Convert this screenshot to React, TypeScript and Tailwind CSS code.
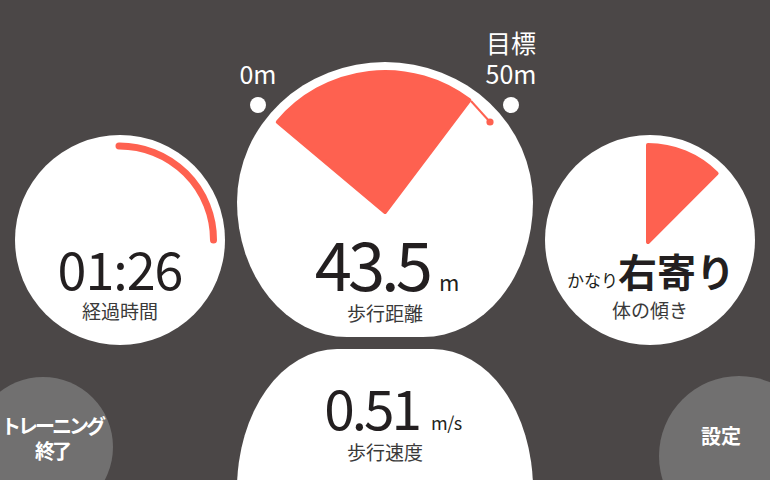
import React from "react";

const coral = "#fe6150";

function TimeDial() {
  return (
    <div className="relative mt-[135px] h-[210px] w-[210px] shrink-0 rounded-full bg-white">
      <svg className="absolute inset-0" width="210" height="210" viewBox="0 0 210 210">
        <path d="M104 11 A94 94 0 0 1 198.5 105" fill="none" stroke={coral} strokeWidth="7" strokeLinecap="round" />
      </svg>
      <div className="relative flex flex-col items-center pt-[107px]">
        <div className="text-[52px] leading-none tracking-[-1px] text-[#231f20]">01:26</div>
        <div className="mt-[7px] text-[19px] leading-none text-[#3a3a3a]">経過時間</div>
      </div>
    </div>
  );
}

function DistanceGauge() {
  return (
    <div className="relative w-[296px] shrink-0 pt-[62px]">
      <div className="h-[275px] rounded-t-[148px_140px] rounded-b-[110px_135px] bg-white" />
      {/* pie, end markers and pointer */}
      <svg className="absolute left-0 top-0 overflow-visible" width="296" height="337" viewBox="0 0 296 337">
        <path
          d="M148 212 L40.8 122 A140 140 0 0 1 232.3 100.2 Z"
          fill={coral}
          stroke={coral}
          strokeWidth="4"
          strokeLinejoin="round"
        />
        <line x1="234" y1="101" x2="253" y2="122" stroke={coral} strokeWidth="2" />
        <circle cx="253" cy="122" r="3.6" fill={coral} />
        <circle cx="21" cy="105" r="8" fill="#fff" />
        <circle cx="274" cy="105" r="8" fill="#fff" />
      </svg>
      <div className="absolute left-[-19px] top-[58px] w-[80px] text-center text-[25px] leading-[31px] text-white">0m</div>
      <div className="absolute left-[234px] top-[27px] w-[80px] text-center text-[25px] leading-[31px] text-white">
        目標
        <br />
        50m
      </div>
      <div className="absolute left-0 right-0 top-[228px] flex flex-col items-center">
        <div className="flex items-baseline pl-[4px]">
          <span className="text-[67px] leading-none tracking-[-4px] text-[#231f20]">43.5</span>
          <span className="ml-[10px] text-[22px] leading-none text-[#231f20]">m</span>
        </div>
        <div className="mt-[8px] text-[19px] leading-none text-[#3a3a3a]">歩行距離</div>
      </div>
    </div>
  );
}

function TiltDial() {
  return (
    <div className="relative mt-[135px] h-[210px] w-[210px] shrink-0 rounded-full bg-white">
      <svg className="absolute inset-0" width="210" height="210" viewBox="0 0 210 210">
        <path
          d="M103 107 L103 10 A97 97 0 0 1 171.6 38.4 Z"
          fill={coral}
          stroke={coral}
          strokeWidth="4"
          strokeLinejoin="round"
        />
      </svg>
      <div className="relative flex flex-col items-center pt-[116px]">
        <div className="flex items-baseline pl-[2px]">
          <span className="text-[17px] leading-none text-[#231f20]">かなり</span>
          <span className="text-[39px] font-bold leading-none text-[#231f20]">右寄り</span>
        </div>
        <div className="mt-[10px] text-[19px] leading-none text-[#3a3a3a]">体の傾き</div>
      </div>
    </div>
  );
}

export default function App() {
  return (
    <div className="h-[480px] w-[770px] overflow-hidden bg-[#4b4747] font-['Noto_Sans_CJK_JP',sans-serif]">
      <div className="flex h-[337px] items-start gap-[12px] px-[15px]">
        <TimeDial />
        <DistanceGauge />
        <TiltDial />
      </div>
      <div className="mt-[12px] flex items-start">
        {/* end training button */}
        <div className="ml-[-27px] mt-[28px] h-[140px] w-[140px] shrink-0 rounded-full bg-[#717070] pl-[18px] pt-[36px] text-center text-[20px] font-bold leading-[25px] tracking-[-3px] text-white">
          トレーニング
          <br />
          終了
        </div>
        <div className="ml-[124px] h-[150px] w-[296px] shrink-0 rounded-t-[100px_140px] bg-white pt-[30px]">
          <div className="flex flex-col items-center">
            <div className="flex items-baseline pl-[16px]">
              <span className="text-[55px] leading-none tracking-[-3px] text-[#231f20]">0.51</span>
              <span className="ml-[12px] text-[18px] leading-none tracking-[-0.5px] text-[#231f20]">m/s</span>
            </div>
            <div className="mt-[8px] text-[19px] leading-none text-[#3a3a3a]">歩行速度</div>
          </div>
        </div>
        {/* settings button */}
        <div className="ml-[126px] mt-[27px] h-[160px] w-[160px] shrink-0 rounded-full bg-[#717070] pr-[36px] pt-[47px] text-center text-[20px] font-bold leading-[25px] text-white">
          設定
        </div>
      </div>
    </div>
  );
}
